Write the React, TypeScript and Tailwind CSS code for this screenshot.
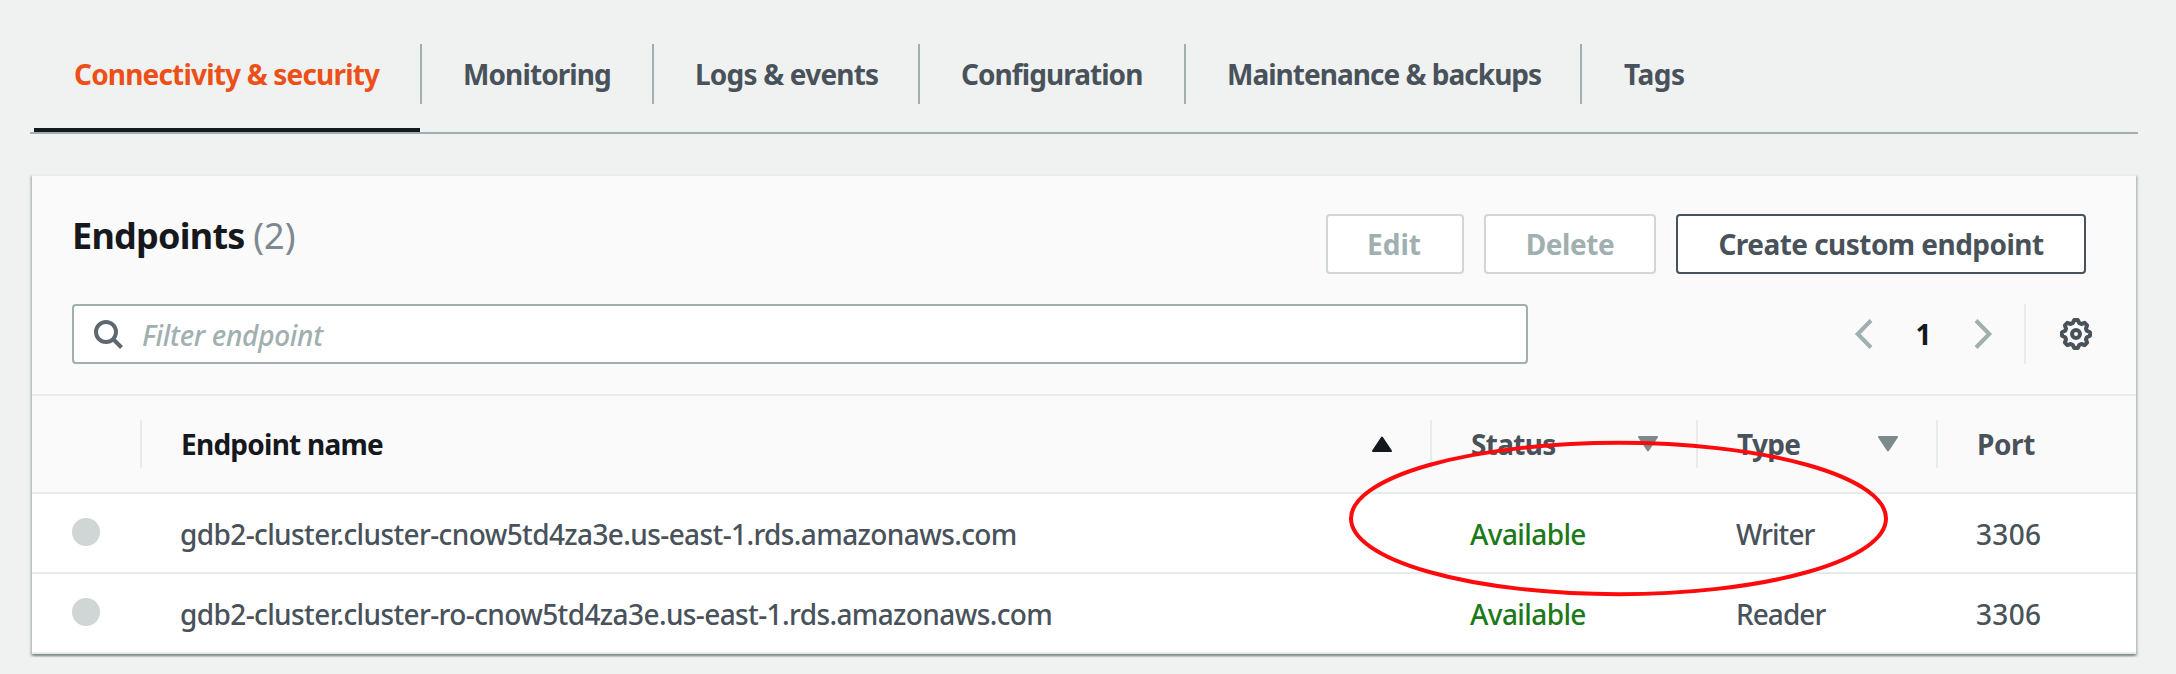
import type { ReactNode } from "react";

type Tab = { label: string; box: string };

const tabs: Tab[] = [
  { label: "Monitoring", box: "w-[232px] tracking-[-0.9px]" },
  { label: "Logs & events", box: "w-[266px] tracking-[-0.8px]" },
  { label: "Configuration", box: "w-[266px] tracking-[-0.95px]" },
  { label: "Maintenance & backups", box: "w-[396px] tracking-[-0.98px]" },
];

const endpoints = [
  { name: "gdb2-cluster.cluster-cnow5td4za3e.us-east-1.rds.amazonaws.com", status: "Available", type: "Writer", port: "3306" },
  { name: "gdb2-cluster.cluster-ro-cnow5td4za3e.us-east-1.rds.amazonaws.com", status: "Available", type: "Reader", port: "3306" },
];

const columns = "grid grid-cols-[110px_1290px_266px_240px_198px]";

function gearPath() {
  const point = (r: number, deg: number) => {
    const a = (deg * Math.PI) / 180;
    return (16 + r * Math.cos(a)).toFixed(2) + " " + (16 + r * Math.sin(a)).toFixed(2);
  };
  const points: string[] = [];
  for (let k = 0; k < 8; k++) {
    points.push(point(14.1, k * 45 - 7), point(14.1, k * 45 + 7), point(11.3, k * 45 + 17), point(11.3, k * 45 + 28));
  }
  return "M" + points.join("L") + "Z";
}

function GearIcon() {
  return (
    <svg className="h-8 w-8" viewBox="0 0 32 32" fill="none" stroke="#49525a" strokeWidth="4" strokeLinejoin="round">
      <path d={gearPath()} />
      <circle cx="16" cy="16" r="4" />
    </svg>
  );
}

function Chevron({ d }: { d: string }) {
  return (
    <svg className="h-8 w-5" viewBox="0 0 20 32" fill="none" stroke="#a0afaf" strokeWidth="4">
      <path d={d} />
    </svg>
  );
}

function SortArrow({ up = false }: { up?: boolean }) {
  return (
    <svg className="h-4 w-5" viewBox="0 0 20 16" strokeWidth="2" strokeLinejoin="round">
      {up ? (
        <path d="M10 1.5L19 15H1Z" fill="#15181d" stroke="#15181d" />
      ) : (
        <path d="M10 14.5L1 1H19Z" fill="#7d8a8b" stroke="#7d8a8b" />
      )}
    </svg>
  );
}

function Button({ className, children }: { className: string; children: ReactNode }) {
  return (
    <button type="button" className={`flex h-[60px] items-center justify-center rounded-[4px] border-2 bg-white font-bold ${className}`}>
      {children}
    </button>
  );
}

function HeaderCell({ className, label, arrow }: { className: string; label: string; arrow?: ReactNode }) {
  return (
    <div className="flex h-12 items-center justify-between border-r-2 border-[#e7ebea] pr-[38px] pl-[39px] last:border-r-0">
      <span className={className}>{label}</span>
      {arrow}
    </div>
  );
}

export default function App() {
  return (
    <div className="relative h-[674px] w-[2176px] overflow-hidden bg-[#f0f2f1] pr-[38px] pl-[30px] font-['Noto_Sans',sans-serif] text-[28px] leading-[40px] whitespace-nowrap text-[#49525a]">
      <nav className="flex h-[134px] border-b-2 border-[#a0afaf] pt-11 pl-1 font-bold">
        <div className="flex h-[88px] w-[386px] flex-col justify-between border-b-4 border-[#15181d]">
          <div className="flex h-[60px] items-center pl-[40px] tracking-[-0.82px] text-[#ec5018]">Connectivity &amp; security</div>
        </div>
        <div className="h-[60px] w-0.5 bg-[#a0afaf]" />
        {tabs.map((tab) => (
          <div key={tab.label} className={`flex h-[60px] items-center border-r-2 border-[#a0afaf] pl-[41px] ${tab.box}`}>
            {tab.label}
          </div>
        ))}
        <div className="flex h-[60px] items-center pl-[42px] tracking-[-0.45px]">Tags</div>
      </nav>

      <section className="mt-10 ml-0.5 h-[480px] w-[2104px] border-t-2 border-[#e9eceb] bg-white shadow-[0_2px_2px_rgba(0,28,36,0.3),2px_2px_2px_rgba(0,28,36,0.15),-2px_2px_2px_rgba(0,28,36,0.15)]">
        <div className="h-[220px] border-b-2 border-[#e7ebea] bg-[#fafafa] pt-[38px] pr-[44px] pl-[40px]">
          <div className="flex h-[60px] items-center justify-between pr-[6px]">
            <h1 className="pb-[17px] text-[36px] tracking-[-0.75px]">
              <span className="font-bold text-[#15181d]">Endpoints</span>{" "}
              <span className="tracking-normal text-[#7d898f]">(2)</span>
            </h1>
            <div className="flex gap-5">
              <Button className="w-[138px] border-[#cfd6d5] pr-0.5 text-[#a0afaf]">Edit</Button>
              <Button className="w-[172px] border-[#cfd6d5] tracking-[-0.4px] text-[#a0afaf]">Delete</Button>
              <Button className="w-[410px] border-[#49525a] tracking-[-0.54px]">Create custom endpoint</Button>
            </div>
          </div>
          <div className="mt-[30px] flex h-[60px] items-center justify-between">
            <div className="flex h-[60px] w-[1456px] items-center rounded-[4px] border-2 border-[#a0afaf] bg-white pl-5">
              <svg className="h-[30px] w-[30px]" viewBox="0 0 30 30" fill="none" stroke="#5f6870" strokeWidth="4">
                <circle cx="12" cy="13" r="10" />
                <path d="M18.5 19.5L27.5 28.5" />
              </svg>
              <span className="pt-0.5 pl-[18px] font-medium tracking-[-0.3px] text-[#a0afaf] italic">Filter endpoint</span>
            </div>
            <div className="flex items-center">
              <Chevron d="M18 2.5L4.7 16L18 29.5" />
              <span className="w-[101px] text-center font-bold text-[#15181d]">1</span>
              <Chevron d="M2 2.5L15.3 16L2 29.5" />
              <div className="mr-[34px] ml-[30px] h-[60px] w-0.5 bg-[#e7ebea]" />
              <GearIcon />
            </div>
          </div>
        </div>

        <div className={`h-[98px] items-center border-b-2 border-[#e7ebea] bg-[#fafafa] font-bold ${columns}`}>
          <div className="h-12 border-r-2 border-[#e7ebea]" />
          <HeaderCell className="tracking-[-0.75px] text-[#15181d]" label="Endpoint name" arrow={<SortArrow up />} />
          <HeaderCell className="tracking-[-0.7px]" label="Status" arrow={<SortArrow />} />
          <HeaderCell className="tracking-[-0.7px]" label="Type" arrow={<SortArrow />} />
          <HeaderCell className="tracking-[-0.4px]" label="Port" />
        </div>

        {endpoints.map((e) => (
          <div key={e.name} className={`h-20 items-center border-b-2 border-[#e7ebea] font-medium ${columns}`}>
            <div className="mb-0.5 ml-10 size-7 rounded-full bg-[#cfd6d5]" />
            <span className="pt-0.5 pl-[38px] tracking-[-0.61px]">{e.name}</span>
            <span className="pt-0.5 pl-[38px] tracking-[-0.6px] text-[#1b7a17]">{e.status}</span>
            <span className="pt-0.5 pl-[38px] tracking-[-0.95px]">{e.type}</span>
            <span className="pt-0.5 pl-[38px] tracking-[0.3px]">{e.port}</span>
          </div>
        ))}
      </section>

      <svg className="pointer-events-none absolute top-[438px] left-[1346px] h-[160px] w-[546px]" viewBox="0 0 546 160" fill="none">
        <ellipse cx="272.5" cy="80.5" rx="267.5" ry="75.7" stroke="#fd0a0c" strokeWidth="4" />
      </svg>
    </div>
  );
}
